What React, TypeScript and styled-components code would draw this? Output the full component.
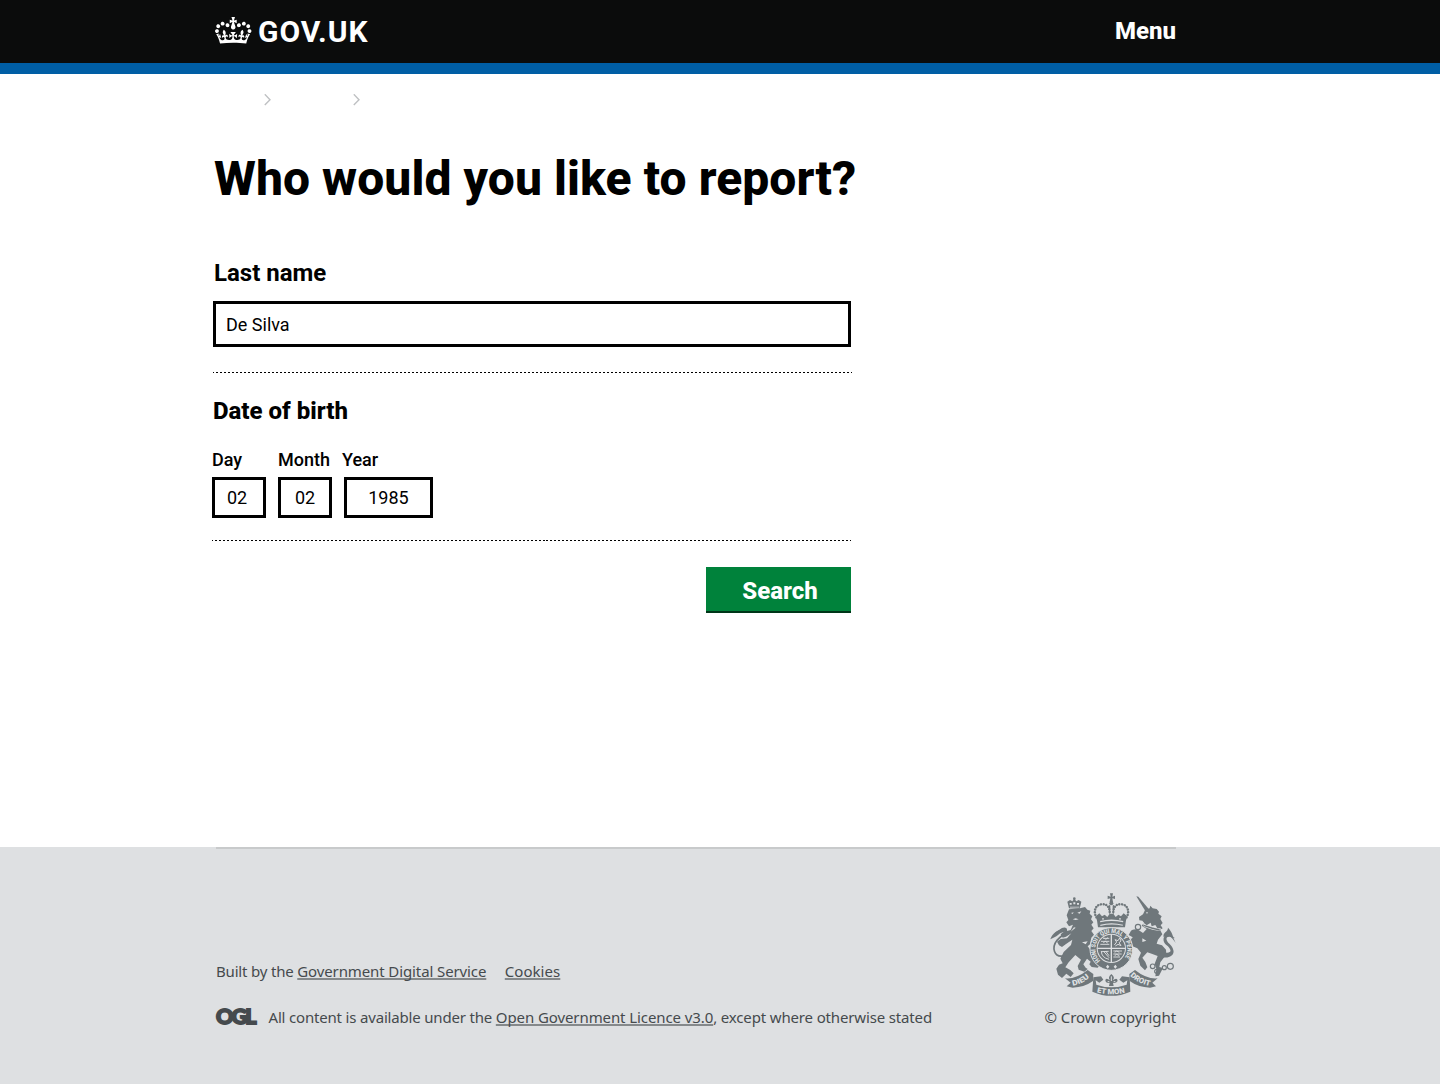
import React from 'react';
import styled, { createGlobalStyle } from 'styled-components';

const GlobalStyle = createGlobalStyle`
  *, *::before, *::after { box-sizing: border-box; }
  body { margin: 0; background: #fff; color: #000; font-family: Roboto, "Liberation Sans", sans-serif; }
`;

const Page = styled.div`
  display: flex;
  flex-direction: column;
  min-height: 1084px;
`;

const Header = styled.header`
  height: 74px;
  background: #0b0c0c;
  border-bottom: 11px solid #005ea5;
`;

const Container = styled.div`
  width: 961px;
  margin-left: 215px;
`;

const HeaderBar = styled(Container)`
  display: flex;
  justify-content: space-between;
  align-items: center;
  height: 62px;
`;

const Brand = styled.a`
  display: flex;
  align-items: flex-start;
  gap: 6px;
  height: 28px;
  color: #fff;
  text-decoration: none;
`;

const BrandName = styled.span`
  font: 700 30px/30px Roboto, "Liberation Sans", sans-serif;
  letter-spacing: 0.95px;
`;

const MenuLink = styled.a`
  color: #fff;
  font-size: 24px;
  line-height: 28px;
  font-weight: 800;
`;

const Breadcrumbs = styled.nav`
  display: flex;
  gap: 82px;
  height: 77px;
  padding: 20px 0 0 49px;
`;

const Main = styled.main`
  width: 640px;
  margin-left: 212px;
  flex: 1;
`;

const Title = styled.h1`
  margin: 0 0 52px 2px;
  font-size: 48px;
  line-height: 56px;
  font-weight: 800;
  letter-spacing: 0.07px;
  white-space: nowrap;
`;

const Label = styled.label<{ $inset?: number; $weight?: number }>`
  display: block;
  padding-left: ${p => p.$inset ?? 0}px;
  font-size: 24px;
  line-height: 28px;
  font-weight: ${p => p.$weight ?? 700};
`;

const TextInput = styled.input`
  display: block;
  width: 638px;
  height: 46px;
  margin: 14px 0 25px 1px;
  padding: 0 10px;
  border: 3px solid #000;
  border-radius: 0;
  font: 400 18px/20px Roboto, sans-serif;
  color: #000;
  outline: 0;
`;

const Divider = styled.div<{ $inset?: number }>`
  width: 639px;
  height: 1px;
  margin-left: ${p => p.$inset ?? 0}px;
  background: repeating-linear-gradient(90deg, #000 0 1px, transparent 1px 2.994px, #000 2.994px 3.994px);
`;

const DateGroup = styled.fieldset`
  margin: 24px 0 22px;
  padding: 0;
  border: 0;
`;

const DateFields = styled.div`
  display: flex;
  gap: 12px;
  margin-top: 25px;
`;

const DateField = styled.div<{ $width: number }>`
  width: ${p => p.$width}px;
`;

const SmallLabel = styled.label<{ $shift?: number }>`
  display: block;
  margin-left: ${p => p.$shift ?? 0}px;
  font-size: 18px;
  line-height: 20px;
  font-weight: 500;
  white-space: nowrap;
`;

const DateInput = styled.input<{ $start: number }>`
  display: block;
  width: 100%;
  height: 41px;
  margin-top: 7px;
  padding: 0 0 0 ${p => p.$start}px;
  border: 3px solid #000;
  border-radius: 0;
  font: 400 18px/20px Roboto, sans-serif;
  color: #000;
  outline: 0;
`;

const Actions = styled.div`
  display: flex;
  justify-content: flex-end;
  padding: 26px 1px 0 0;
`;

const SearchButton = styled.button`
  width: 145px;
  height: 46px;
  padding: 3px 0 0 3px;
  border: 0;
  border-bottom: 2px solid #003618;
  background: #00823b;
  color: #fff;
  font: 800 24px/28px Roboto, sans-serif;
`;

const Footer = styled.footer`
  height: 237px;
  background: #dee0e2;
  color: #454a4d;
  font-family: "Noto Sans", sans-serif;
  font-size: 15px;
  line-height: 20px;
`;

const FooterBody = styled.div`
  display: flex;
  justify-content: space-between;
  align-items: flex-end;
  width: 960px;
  height: 180px;
  margin-left: 216px;
  border-top: 2px solid #c8cacb;
`;

const Meta = styled.div`
  display: flex;
  flex-direction: column;
  gap: 26px;
`;

const MetaLine = styled.div`
  display: flex;
  height: 20px;
  white-space: nowrap;
`;

const Phrase = styled.span<{ $spacing?: number }>`
  letter-spacing: ${p => p.$spacing ?? 0}px;
  white-space: pre;
`;

const FooterLink = styled.a<{ $spacing?: number; $gap?: number }>`
  letter-spacing: ${p => p.$spacing ?? 0}px;
  margin-left: ${p => p.$gap ?? 0}px;
  text-decoration: underline;
  text-decoration-color: #85898b;
  text-decoration-thickness: 2px;
  text-underline-offset: 1px;
  text-decoration-skip-ink: none;
`;

const LicenceMark = styled.span`
  width: 52.5px;
  font: 900 21.5px/18px Lato, sans-serif;
  letter-spacing: -1.9px;
  -webkit-text-stroke: 1.8px #454a4d;
`;

const Copyright = styled.div`
  display: flex;
  flex-direction: column;
  align-items: flex-end;
  gap: 10px;
  margin-right: -1px;
`;

const CopyrightText = styled.span`
  padding-right: 1px;
  letter-spacing: -0.05px;
`;

const Crown = () => (
  <svg width="37" height="27" viewBox="0 0 134 97" fill="#fff" aria-hidden="true">
    <path d="M25 30.2c3.5 1.5 7.7-.2 9.1-3.7 1.5-3.6-.2-7.8-3.9-9.2-3.6-1.4-7.6.3-9.1 3.9-1.4 3.5.3 7.5 3.9 9zM9 39.5c3.6 1.5 7.8-.2 9.2-3.7 1.5-3.6-.2-7.8-3.9-9.1-3.6-1.5-7.6.2-9.1 3.8-1.4 3.5.3 7.5 3.8 9zM4.4 57.2c3.5 1.5 7.7-.2 9.1-3.8 1.5-3.6-.2-7.7-3.9-9.1-3.5-1.5-7.6.3-9.1 3.8-1.4 3.5.3 7.6 3.9 9.1zm38.3-21.4c3.5 1.5 7.7-.2 9.1-3.8 1.5-3.6-.2-7.7-3.9-9.1-3.6-1.5-7.6.3-9.1 3.8-1.3 3.6.4 7.7 3.9 9.1zm64.4-5.6c-3.6 1.5-7.8-.2-9.1-3.7-1.5-3.6.2-7.8 3.8-9.2 3.6-1.4 7.7.3 9.2 3.9 1.3 3.5-.4 7.5-3.9 9zm15.9 9.3c-3.6 1.5-7.7-.2-9.1-3.7-1.5-3.6.2-7.8 3.7-9.1 3.6-1.5 7.7.2 9.2 3.8 1.5 3.5-.3 7.5-3.8 9zm4.7 17.7c-3.6 1.5-7.8-.2-9.2-3.8-1.5-3.6.2-7.7 3.9-9.1 3.6-1.5 7.7.3 9.2 3.8 1.3 3.5-.4 7.6-3.9 9.1zM89.3 35.8c-3.6 1.5-7.8-.2-9.2-3.8-1.4-3.6.2-7.7 3.9-9.1 3.6-1.5 7.7.3 9.2 3.8 1.4 3.6-.3 7.7-3.9 9.1zM69.7 17.7l8.9 4.7V9.3l-8.9 2.8c-.2-.3-.5-.6-.9-.9L72.4 0H59.6l3.5 11.2c-.3.3-.6.5-.9.9l-8.8-2.8v13.1l8.8-4.7c.3.3.6.7.9.9l-5 15.4v.1c-.2.8-.4 1.6-.4 2.4 0 4.1 3.1 7.5 7 8.1h.2c.3 0 .7.1 1 .1.4 0 .7 0 1-.1h.2c4-.6 7.1-4.1 7.1-8.1 0-.8-.1-1.7-.4-2.4V34l-5.1-15.4c.4-.2.7-.6 1-.9zM66 92.8c16.9 0 32.8 1.1 47.1 3.2 4-16.9 8.9-26.7 14-33.5l-9.6-3.4c1 4.9 1.1 7.2 0 10.2-1.5-1.4-3-4.3-4.2-8.7L108.6 76c2.8-2 5-3.2 7.5-3.3-4.4 9.4-10 11.9-13.6 11.2-4.3-.8-6.3-4.6-5.6-7.9 1-4.7 5.7-5.9 8-.5 4.3-8.7-3-11.4-7.6-8.8 7.1-7.2 7.9-13.5 2.1-21.1-8 6.1-8.1 12.3-4.5 20.8-4.7-5.4-12.1-2.5-9.5 6.2 3.4-5.2 7.9-2 7.2 3.1-.6 4.3-6.4 7.8-13.5 7.2-10.3-.9-10.9-8-11.2-13.8 2.5-.5 7.1 1.8 11 7.3L80.2 60c-4.1 4.4-8 5.3-12.3 5.4 1.4-4.4 8-11.6 8-11.6H55.5s6.4 7.2 7.9 11.6c-4.2-.1-8-1-12.3-5.4l1.4 16.4c3.9-5.5 8.5-7.7 10.9-7.3-.3 5.8-.9 12.8-11.1 13.8-7.2.6-12.9-2.9-13.5-7.2-.7-5 3.8-8.3 7.1-3.1 2.7-8.7-4.6-11.6-9.4-6.2 3.7-8.5 3.6-14.7-4.6-20.8-5.8 7.6-5 13.9 2.2 21.1-4.7-2.6-11.9.1-7.7 8.8 2.3-5.5 7.1-4.2 8.1.5.7 3.3-1.3 7.1-5.7 7.9-3.5.7-9-1.8-13.5-11.2 2.5.1 4.7 1.3 7.5 3.3l-4.7-15.4c-1.2 4.4-2.7 7.2-4.3 8.7-1.1-3-.9-5.3 0-10.2l-9.5 3.4c5 6.9 9.9 16.7 14 33.5 14.8-2.1 30.8-3.2 47.7-3.2z" />
  </svg>
);

const Chevron = () => (
  <svg width="7" height="12" viewBox="0 0 7 12" fill="none" stroke="#bfc1c3" strokeWidth="1.4" aria-hidden="true">
    <path d="M0.8 0.3 L6 5.7 L0.8 11.1" />
  </svg>
);

const INK = '#6f777b';
const PAPER = '#dee0e2';

const RoyalArms = () => (
  <svg width="128" height="105" viewBox="27 21 384 315" fill={INK} aria-hidden="true">
    {/* Lion: crown, mane, body, paws and tail */}
    <path d="M87 70 L82 50 L90 45 L97 49 L103 41 L109 49 L116 45 L124 50 L119 71 Z" />
    <path d="M89 54h6v5h-6zM100 52h6v6h-6zM111 54h6v5h-6zM90 65h28v2.500h-28z" fill={PAPER} />
    <circle cx="103" cy="41" r="4" />
    <path d="M87 73 L120 70 L135 66 L142 74 L151 77 L149 86 L157 94 L153 103 L160 112 L154 119 L161 130 L154 138 L162 149 L154 158 L150 178 L143 184 L151 194 L165 213 L171 232 L181 240 L173 248 L155 246 L148 238 L152 230 L141 221 L130 238 L137 248 L143 252 L133 260 L116 254 L113 243 L123 224 L106 210 L86 232 L76 247 L91 255 L101 265 L92 276 L79 266 L66 279 L54 269 L49 251 L57 239 L68 235 L61 221 L71 201 L93 180 L97 164 L77 178 L66 186 L57 181 L51 170 L62 162 L81 160 L94 145 L78 155 L68 158 L62 148 L72 140 L92 135 L99 119 L87 124 L79 112 L85 105 L80 91 Z" />
    <path d="M93 84 L101 82 L98 87 Z M112 83 L124 79 L119 86 Z M98 103 L107 100 L116 103 L107 105 Z M102 127 L92 140 L107 128 Z M137 178 L126 172 L143 169 Z" fill={PAPER} />
    <path d="M70 213 C42 218 34 188 51 166 C66 149 83 143 78 132 C69 124 59 139 47 144" fill="none" stroke={INK} strokeWidth="5" />
    <path d="M31 163 C38 143 53 132 80 131 C83 143 67 138 55 149 C47 157 40 157 31 163 Z" />
    {/* Unicorn: horn, head, collar, body and tail */}
    <path d="M289 34 L295 35 L327 73 L316 78 Z" />
    <path d="M315 75 L329 70 L331 62 L338 70 L350 72 L357 80 L355 86 L365 94 L361 102 L368 114 L362 121 L368 130 L360 134 L367 148 L354 164 L350 176 L366 181 L378 194 L379 210 L369 221 L361 232 L358 246 L369 249 L357 272 L346 274 L349 252 L344 236 L353 213 L337 207 L322 202 L307 218 L316 231 L322 247 L315 256 L301 242 L295 222 L303 203 L292 190 L278 184 L270 171 L278 157 L266 150 L273 137 L291 132 L309 144 L320 132 L305 122 L312 113 L307 107 L298 106 L297 96 L309 88 Z" />
    <path d="M309 112 L320 121 L332 113 L335 124 L346 120 L352 130 L363 130 L358 138 L337 134 L311 125 Z" fill={PAPER} />
    <path d="M311 121 L335 129 L359 135" fill="none" stroke={INK} strokeWidth="4" />
    <path d="M318 82 L324 82 L321 87 Z M307 160 L319 167 L307 171 Z" fill={PAPER} />
    <path d="M376 203 C397 206 396 192 378 179 C365 168 369 148 390 148 L405 160 L391 156 C377 153 375 166 389 177 C414 203 395 222 369 217 Z" />
    <path d="M371 157 C367 141 384 142 384 128 C398 142 397 153 407 174 C399 162 392 152 383 152 Q376 152 371 157 Z" />
    {/* Chain */}
    <g fill="none" stroke={INK} strokeWidth="3.5">
      <circle cx="294" cy="126" r="8" /><circle cx="282" cy="142" r="7" />
      <circle cx="338" cy="244" r="7" /><circle cx="350" cy="259" r="6" />
      <circle cx="373" cy="248" r="6" /><circle cx="391" cy="244" r="9" />
      <path d="M272 162 L296 169 L299 184" />
    </g>
    {/* Imperial crown */}
    <path d="M210 25h9l-2 10 8-3v10l-8-2 2 11h-10l2-11-8 2V32l9 3z" />
    <circle cx="214" cy="55" r="6" />
    <g fill="none" stroke={INK} strokeLinecap="round">
      <path d="M174 104 C156 82 166 59 184 58 C203 56 208 67 209 82 M255 104 C273 82 263 59 245 58 C226 56 221 67 220 82" strokeWidth="7.5" strokeDasharray="0.1 8" />
      <path d="M209 62 V84 M220 62 V84" strokeWidth="4" />
    </g>
    <path d="M169 92 L178 85 L186 94 L194 89 L202 96 L209 86 H220 L227 96 L235 89 L243 94 L251 85 L260 92 L255 127 H174 Z" />
    <path d="M180 108 Q214 99 250 108 L249 112 Q214 104 181 112 Z M181 119 Q214 110 249 119 L248 122 Q214 115 181 123 Z M187 99h4v5h-4zM238 99h4v5h-4z" fill={PAPER} />
    {/* Garter and quartered shield */}
    <circle cx="214" cy="192" r="64" stroke={PAPER} strokeWidth="3" />
    <circle cx="214" cy="190" r="44" fill={PAPER} />
    <circle cx="214" cy="190" r="41" />
    <path d="M214 148 V232 M172 190 H256" stroke={PAPER} strokeWidth="4" />
    <g fill="none" stroke={PAPER} strokeWidth="2.8">
      <path d="M183 169h25M181 178h27M189 160h19M192 158l5 5 7-5M190 173l6-4 7 5M220 198h26M220 207h25M220 216h20M224 202l6-4 8 4M224 212l6-4 8 4" />
      <path d="M184 198 Q184 218 207 223 M190 198 L207 218 M197 198 L207 212 M184 200 L206 199" />
      <path d="M223 180 l7-9-5-7 9 3 5-8 4 9-6 5 6 9-9-4-8 5" />
    </g>
    <defs>
      <path id="garter" d="M181 227 A48 48 0 1 1 247 227" />
      <path id="scrollLeft" d="M98 302 Q128 298 152 273" />
      <path id="scrollMid" d="M170 322 Q214 334 258 322" />
      <path id="scrollRight" d="M270 272 Q296 298 334 303" />
    </defs>
    <text fill={PAPER} fontFamily="Roboto, sans-serif" fontWeight="900" fontSize="19">
      <textPath href="#garter" textLength="216" lengthAdjust="spacingAndGlyphs">HONI SOIT QUI MAL Y PENSE</textPath>
    </text>
    <path d="M198 245l5-6 5 6-5 6zM221 245l5-6 5 6-5 6z" fill={PAPER} />
    {/* Motto scroll */}
    <path d="M75 280 Q108 283 143 255 L160 267 L159 288 Q133 307 98 308 L80 304 L92 293 Z" />
    <path d="M353 280 Q320 283 285 255 L268 267 L269 288 Q295 307 330 308 L348 304 L337 293 Z" />
    <path d="M160 277 L183 274 L190 284 L178 293 L167 286 L169 299 Q214 315 260 299 L262 286 L250 293 L238 284 L246 274 L269 277 L271 320 Q214 345 157 320 Z" />
    <g fill={PAPER} fontFamily="Roboto, sans-serif" fontWeight="900" fontSize="22">
      <text><textPath href="#scrollLeft" textLength="58" lengthAdjust="spacingAndGlyphs">DIEU</textPath></text>
      <text><textPath href="#scrollMid" textLength="86" lengthAdjust="spacingAndGlyphs">ET MON</textPath></text>
      <text><textPath href="#scrollRight" textLength="68" lengthAdjust="spacingAndGlyphs">DROIT</textPath></text>
    </g>
    <path d="M214 267 q13 10 4 19 q14-10 15 2 q-6 8-14 5 l2 10h-14l2-10q-9 3-13-5q0-12 14-2q-8-9 4-19z" />
    <path d="M214 274v14M203 290h5M221 290h5" stroke={PAPER} strokeWidth="3" />
  </svg>
);

export default function App() {
  return (
    <Page>
      <GlobalStyle />
      <Header>
        <HeaderBar>
          <Brand>
            <Crown />
            <BrandName>GOV.UK</BrandName>
          </Brand>
          <MenuLink>Menu</MenuLink>
        </HeaderBar>
      </Header>
      <Container>
        <Breadcrumbs>
          <Chevron />
          <Chevron />
        </Breadcrumbs>
      </Container>
      <Main>
        <Title>Who would you like to report?</Title>
        <Label $inset={2} $weight={700} htmlFor="last-name">Last name</Label>
        <TextInput id="last-name" defaultValue="De Silva" />
        <Divider $inset={1} />
        <DateGroup>
          <Label as="div" $inset={1} $weight={800}>Date of birth</Label>
          <DateFields>
            <DateField $width={54}>
              <SmallLabel>Day</SmallLabel>
              <DateInput $start={12} defaultValue="02" />
            </DateField>
            <DateField $width={54}>
              <SmallLabel>Month</SmallLabel>
              <DateInput $start={14} defaultValue="02" />
            </DateField>
            <DateField $width={89}>
              <SmallLabel $shift={-2}>Year</SmallLabel>
              <DateInput $start={21.2} defaultValue="1985" />
            </DateField>
          </DateFields>
        </DateGroup>
        <Divider />
        <Actions>
          <SearchButton>Search</SearchButton>
        </Actions>
      </Main>
      <Footer>
        <FooterBody>
          <Meta>
            <MetaLine>
              <Phrase $spacing={-0.18}>Built by the </Phrase>
              <FooterLink $spacing={-0.11}>Government Digital Service</FooterLink>
              <FooterLink $gap={18.5} $spacing={0.05}>Cookies</FooterLink>
            </MetaLine>
            <MetaLine>
              <LicenceMark>OGL</LicenceMark>
              <Phrase $spacing={-0.18}>All content is available under the </Phrase>
              <FooterLink $spacing={-0.09}>Open Government Licence v3.0</FooterLink>
              <Phrase $spacing={-0.15}>, except where otherwise stated</Phrase>
            </MetaLine>
          </Meta>
          <Copyright>
            <RoyalArms />
            <CopyrightText>© Crown copyright</CopyrightText>
          </Copyright>
        </FooterBody>
      </Footer>
    </Page>
  );
}
